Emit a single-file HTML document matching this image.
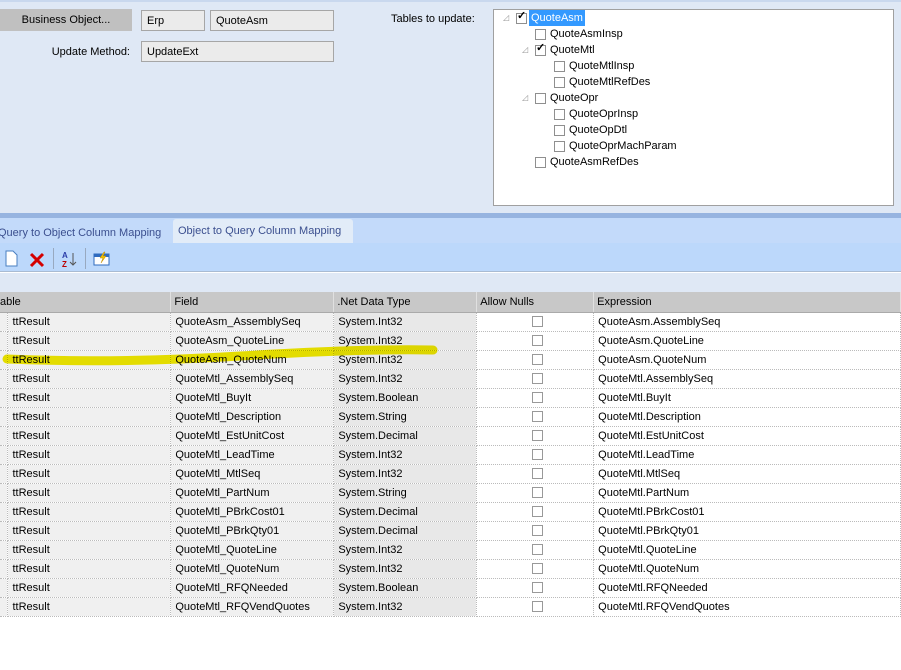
<!DOCTYPE html>
<html><head><style>
*{margin:0;padding:0;box-sizing:border-box}
body{width:901px;height:670px;background:#fff;font-family:"Liberation Sans",sans-serif;font-size:11px;color:#000;position:relative;overflow:hidden}
.a{position:absolute}
.fld{position:absolute;background:#ebebeb;border:1px solid #a6a6a6;padding:4px 0 0 5px;height:21px}
.cb{position:absolute;width:11px;height:11px;border:1px solid #8f8f8f;background:#fff}
.tr{position:absolute;height:16px;line-height:16px}
.exp{position:absolute;color:#999;font-size:8px}
table{border-collapse:collapse;position:absolute;left:0;top:292px;table-layout:fixed}
td{height:19px;border-right:1px dotted #bbb;border-bottom:1px dotted #bbb;padding-left:4px;white-space:nowrap;overflow:hidden}
th{height:20px;background:#c8c8c8;font-weight:normal;text-align:left;padding-left:3px;border-right:1px solid #e0e0e0;border-bottom:1px solid #aaa}
td.g{background:#f0f0f0}td.h{background:#e8e8e8}
td.c{text-align:center}
.ck{display:inline-block;width:11px;height:11px;border:1px solid #999;vertical-align:middle}
</style></head><body>
<div class="a" style="left:0;top:0;width:901px;height:213px;background:#dfe8f5;border-top:2px solid #c9d8ee"></div>
<div class="a" style="left:0;top:9px;width:132px;height:22px;background:#c0c0c0;text-align:center;line-height:22px">Business Object...</div>
<div class="fld" style="left:141px;top:10px;width:64px">Erp</div>
<div class="fld" style="left:210px;top:10px;width:124px">QuoteAsm</div>
<div class="a" style="left:0;top:46px;width:130px;text-align:right">Update Method:</div>
<div class="fld" style="left:141px;top:41px;width:193px">UpdateExt</div>
<div class="a" style="left:391px;top:13px">Tables to update:</div>
<div class="a" style="left:493px;top:9px;width:401px;height:197px;background:#fff;border:1px solid #a0a0a0"></div>
<div class="exp" style="left:503px;top:13px">◿</div>
<div class="cb" style="left:516px;top:13px"></div><div class="a" style="left:517px;top:9px;font-size:11px;font-weight:bold">✓</div>
<div class="tr" style="left:529px;top:10px;background:#3399ff;color:#fff;padding:0 2px">QuoteAsm</div>
<div class="cb" style="left:535px;top:29px"></div><div class="tr" style="left:550px;top:26px">QuoteAsmInsp</div>
<div class="exp" style="left:522px;top:45px">◿</div>
<div class="cb" style="left:535px;top:45px"></div><div class="a" style="left:536px;top:41px;font-weight:bold">✓</div><div class="tr" style="left:550px;top:42px">QuoteMtl</div>
<div class="cb" style="left:554px;top:61px"></div><div class="tr" style="left:569px;top:58px">QuoteMtlInsp</div>
<div class="cb" style="left:554px;top:77px"></div><div class="tr" style="left:569px;top:74px">QuoteMtlRefDes</div>
<div class="exp" style="left:522px;top:93px">◿</div>
<div class="cb" style="left:535px;top:93px"></div><div class="tr" style="left:550px;top:90px">QuoteOpr</div>
<div class="cb" style="left:554px;top:109px"></div><div class="tr" style="left:569px;top:106px">QuoteOprInsp</div>
<div class="cb" style="left:554px;top:125px"></div><div class="tr" style="left:569px;top:122px">QuoteOpDtl</div>
<div class="cb" style="left:554px;top:141px"></div><div class="tr" style="left:569px;top:138px">QuoteOprMachParam</div>
<div class="cb" style="left:535px;top:157px"></div><div class="tr" style="left:550px;top:154px">QuoteAsmRefDes</div>

<div class="a" style="left:0;top:213px;width:901px;height:5px;background:#97b4e0"></div>
<div class="a" style="left:0;top:218px;width:901px;height:25px;background:#c3dafa"></div>
<div class="a" style="left:-2px;top:227px;color:#3b4f8f">Query to Object Column Mapping</div>
<div class="a" style="left:173px;top:219px;width:180px;height:24px;background:#e2ecf8;border-radius:3px 3px 0 0;color:#3b4f8f;padding:6px 0 0 5px">Object to Query Column Mapping</div>
<div class="a" style="left:0;top:243px;width:901px;height:29px;background:#bcd8fb;border-bottom:1px solid #a9bbd2"></div>
<svg class="a" style="left:0;top:243px" width="120" height="29">
<path d="M6 8h7l4 4v11H6z" fill="#fff" stroke="#4a7fc1"/>
<path d="M31 11l12 12M43 11L31 23" stroke="#d40000" stroke-width="3"/>
<line x1="53.5" y1="5" x2="53.5" y2="26" stroke="#98a9c0"/>
<text x="62" y="15" font-size="8" fill="#2a3ca8" font-weight="bold" font-family="Liberation Sans">A</text>
<text x="62" y="24" font-size="8" fill="#b00" font-weight="bold" font-family="Liberation Sans">Z</text>
<path d="M73 10v12M70 19l3 3 3-3" stroke="#555" fill="none"/>
<line x1="85.5" y1="5" x2="85.5" y2="26" stroke="#98a9c0"/>
<rect x="94" y="11" width="15" height="11" fill="#fff" stroke="#2f6bbf"/>
<rect x="94" y="11" width="15" height="3" fill="#2f6bbf"/>
<path d="M104 9l-4 6h3l-2 5 5-7h-3l2-4z" fill="#f2c200" stroke="#c08a00" stroke-width=".5"/>
</svg>
<div class="a" style="left:0;top:273px;width:901px;height:19px;background:#dfe8f5"></div>

<table>
<colgroup><col style="width:8px"><col style="width:163px"><col style="width:163px"><col style="width:143px"><col style="width:117px"><col style="width:307px"></colgroup>
<tr><th colspan="2" style="padding-left:0">able</th><th>Field</th><th>.Net Data Type</th><th>Allow Nulls</th><th>Expression</th></tr>
<tr><td class="g"></td><td class="g">ttResult</td><td class="g">QuoteAsm_AssemblySeq</td><td class="h">System.Int32</td><td class="c"><span class="ck"></span></td><td>QuoteAsm.AssemblySeq</td></tr>
<tr><td class="g"></td><td class="g">ttResult</td><td class="g">QuoteAsm_QuoteLine</td><td class="h">System.Int32</td><td class="c"><span class="ck"></span></td><td>QuoteAsm.QuoteLine</td></tr>
<tr><td class="g"></td><td class="g">ttResult</td><td class="g">QuoteAsm_QuoteNum</td><td class="h">System.Int32</td><td class="c"><span class="ck"></span></td><td>QuoteAsm.QuoteNum</td></tr>
<tr><td class="g"></td><td class="g">ttResult</td><td class="g">QuoteMtl_AssemblySeq</td><td class="h">System.Int32</td><td class="c"><span class="ck"></span></td><td>QuoteMtl.AssemblySeq</td></tr>
<tr><td class="g"></td><td class="g">ttResult</td><td class="g">QuoteMtl_BuyIt</td><td class="h">System.Boolean</td><td class="c"><span class="ck"></span></td><td>QuoteMtl.BuyIt</td></tr>
<tr><td class="g"></td><td class="g">ttResult</td><td class="g">QuoteMtl_Description</td><td class="h">System.String</td><td class="c"><span class="ck"></span></td><td>QuoteMtl.Description</td></tr>
<tr><td class="g"></td><td class="g">ttResult</td><td class="g">QuoteMtl_EstUnitCost</td><td class="h">System.Decimal</td><td class="c"><span class="ck"></span></td><td>QuoteMtl.EstUnitCost</td></tr>
<tr><td class="g"></td><td class="g">ttResult</td><td class="g">QuoteMtl_LeadTime</td><td class="h">System.Int32</td><td class="c"><span class="ck"></span></td><td>QuoteMtl.LeadTime</td></tr>
<tr><td class="g"></td><td class="g">ttResult</td><td class="g">QuoteMtl_MtlSeq</td><td class="h">System.Int32</td><td class="c"><span class="ck"></span></td><td>QuoteMtl.MtlSeq</td></tr>
<tr><td class="g"></td><td class="g">ttResult</td><td class="g">QuoteMtl_PartNum</td><td class="h">System.String</td><td class="c"><span class="ck"></span></td><td>QuoteMtl.PartNum</td></tr>
<tr><td class="g"></td><td class="g">ttResult</td><td class="g">QuoteMtl_PBrkCost01</td><td class="h">System.Decimal</td><td class="c"><span class="ck"></span></td><td>QuoteMtl.PBrkCost01</td></tr>
<tr><td class="g"></td><td class="g">ttResult</td><td class="g">QuoteMtl_PBrkQty01</td><td class="h">System.Decimal</td><td class="c"><span class="ck"></span></td><td>QuoteMtl.PBrkQty01</td></tr>
<tr><td class="g"></td><td class="g">ttResult</td><td class="g">QuoteMtl_QuoteLine</td><td class="h">System.Int32</td><td class="c"><span class="ck"></span></td><td>QuoteMtl.QuoteLine</td></tr>
<tr><td class="g"></td><td class="g">ttResult</td><td class="g">QuoteMtl_QuoteNum</td><td class="h">System.Int32</td><td class="c"><span class="ck"></span></td><td>QuoteMtl.QuoteNum</td></tr>
<tr><td class="g"></td><td class="g">ttResult</td><td class="g">QuoteMtl_RFQNeeded</td><td class="h">System.Boolean</td><td class="c"><span class="ck"></span></td><td>QuoteMtl.RFQNeeded</td></tr>
<tr><td class="g"></td><td class="g">ttResult</td><td class="g">QuoteMtl_RFQVendQuotes</td><td class="h">System.Int32</td><td class="c"><span class="ck"></span></td><td>QuoteMtl.RFQVendQuotes</td></tr>
</table>
<svg class="a" style="left:0;top:340px;mix-blend-mode:multiply" width="450" height="30">
<path d="M7 19 C80 22,160 21,240 16 S380 9,433 10" stroke="#f2ea00" stroke-width="9" fill="none" stroke-linecap="round"/>
</svg>
</body></html>
